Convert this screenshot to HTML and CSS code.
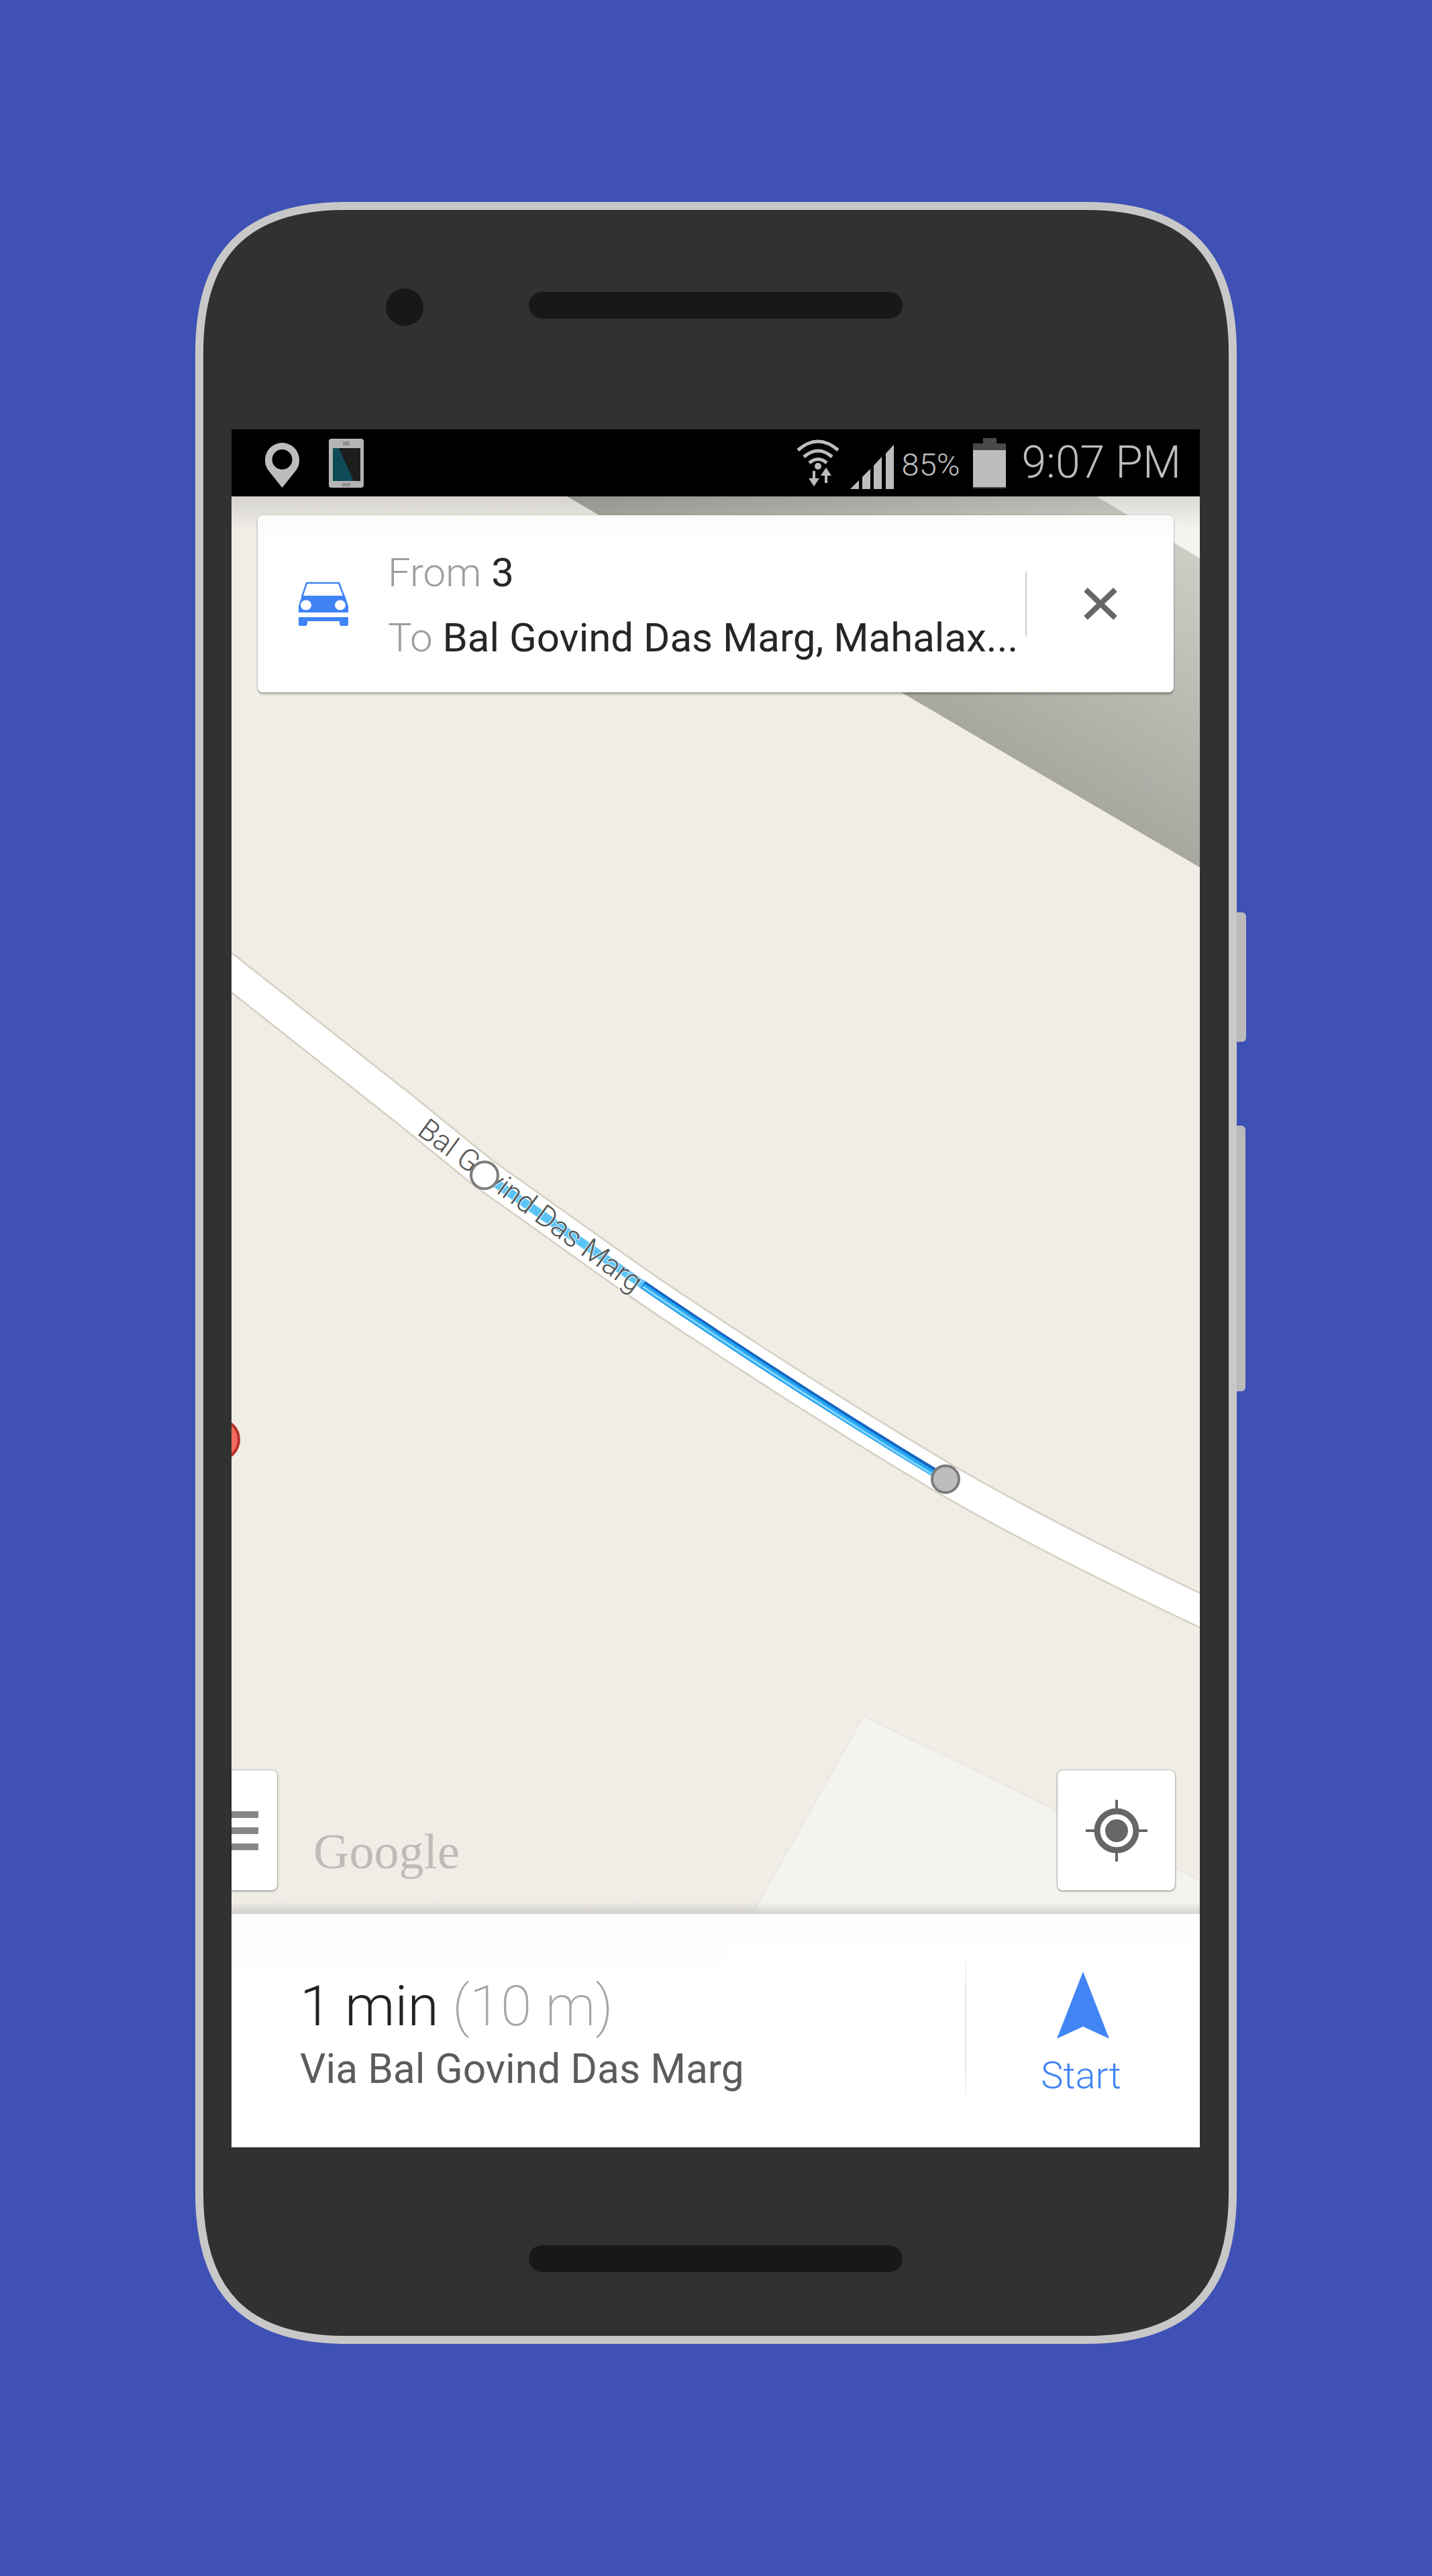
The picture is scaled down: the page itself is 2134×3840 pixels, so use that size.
FILE: index.html
```html
<!DOCTYPE html>
<html lang="en">
<head>
   <meta charset="UTF-8">
   <meta name="viewport" content="width=device-width, initial-scale=1.0">
   <title>Directions</title>
   <link rel="stylesheet" href="styles.css">
</head>
<body>

   <div class="phone">
      <!-- the corners are not quite circular, so the shell is a path -->
      <svg class="phone-shell" viewBox="0 0 1552 3193">
         <path fill="#313131" stroke="#c8c8c8" stroke-width="12" d="M225 6 H1327 C1476 6 1546 76 1546 225 V2968 C1546 3117 1476 3187 1327 3187 H225 C76 3187 6 3117 6 2968 V225 C6 76 76 6 225 6 Z"/>
      </svg>
      <div class="side-btn side-btn-upper"></div>
      <div class="side-btn side-btn-lower"></div>

      <div class="bezel-top">
         <div class="camera"></div>
         <div class="speaker"></div>
      </div>

      <div class="screen">
         <!-- status bar -->
         <div class="status-bar">
            <div class="status-left">
               <svg class="icon-pin" viewBox="395 657 51 68">
                  <path fill="#bdbdbd" fill-rule="evenodd" d="M420.500 725 L399 698 A25.500 26 0 1 1 442 698 Z M420.500 668 A15 15 0 1 0 420.501 698 A15 15 0 1 0 420.500 668 Z"/>
               </svg>
               <svg class="icon-device" viewBox="490 654 52 73">
                  <rect x="490" y="654" width="52" height="73" rx="4" fill="#b4b4b4"/>
                  <rect x="496" y="668" width="41" height="49" fill="#1d1d1d"/>
                  <polygon points="496,668 505,668 527,717 496,717" fill="#0f4a57"/>
                  <rect x="511" y="658" width="10" height="6" fill="#8f8f8f"/>
                  <rect x="510" y="720" width="12" height="5" fill="#8f8f8f"/>
               </svg>
            </div>
            <div class="status-right">
               <svg class="icon-wifi" viewBox="1186 652 66 74">
                  <g fill="none" stroke="#bdbdbd" stroke-width="5">
                     <path d="M1189 670 Q1219 644 1249 670"/>
                     <path d="M1198 680 Q1219 662 1240 680"/>
                     <path d="M1206 689 Q1219 678 1232 689"/>
                  </g>
                  <circle cx="1219" cy="694" r="5" fill="#bdbdbd"/>
                  <path fill="#bdbdbd" d="M1211 701 H1215 V712 H1221 L1213 724 L1205 712 H1211 Z"/>
                  <path fill="#bdbdbd" d="M1231 696 L1239 708 H1233 V719 H1229 V708 H1223 Z"/>
               </svg>
               <svg class="icon-signal" viewBox="1267 658 65 66">
                  <polygon fill="#bdbdbd" points="1267,724 1280,711 1280,724"/>
                  <polygon fill="#bdbdbd" points="1285,706 1297,694 1297,724 1285,724"/>
                  <polygon fill="#bdbdbd" points="1302,689 1314,676 1314,724 1302,724"/>
                  <polygon fill="#bdbdbd" points="1320,671 1332,658 1332,724 1320,724"/>
               </svg>
               <span class="status-pct">85%</span>
               <svg class="icon-battery" viewBox="1451 652 49 75">
                  <rect x="1466" y="652" width="20" height="9" fill="#4a4a4a"/>
                  <rect x="1451" y="660" width="49" height="10" fill="#4a4a4a"/>
                  <rect x="1451" y="670" width="49" height="55" fill="#bdbdbd"/>
                  <rect x="1451" y="725" width="49" height="2" fill="#4a4a4a"/>
               </svg>
               <span class="status-time">9:07 PM</span>
            </div>
         </div>

         <!-- map -->
         <div class="map">
            <svg class="map-canvas" viewBox="345 740 1443 2461">
               <defs>
                  <linearGradient id="buildingShade" gradientUnits="userSpaceOnUse" x1="1500" y1="1120" x2="1700" y2="780">
                     <stop offset="0" stop-color="#a8a8a1"/>
                     <stop offset="1" stop-color="#cdccc5"/>
                  </linearGradient>
                  <linearGradient id="topShade" x1="0" y1="0" x2="0" y2="1">
                     <stop offset="0" stop-color="#000" stop-opacity="0.11"/>
                     <stop offset="1" stop-color="#000" stop-opacity="0"/>
                  </linearGradient>
               </defs>
               <rect x="345" y="740" width="1443" height="2461" fill="#efede6"/>
               <polygon points="1287,2558 1788,2803 1788,3201 925,3201" fill="#f4f3ed" stroke="#e9e8e1" stroke-width="2"/>
               <polygon points="1634,740 1788,740 1788,832" fill="#f5f4ef"/>
               <polygon points="845,740 1634,740 1788,832 1788,1293" fill="url(#buildingShade)"/>
               <rect x="345" y="740" width="1443" height="50" fill="url(#topShade)"/>

               <path class="road-edge" d="M330 1438 L600 1651 L722 1750 C850 1840 950 1915 1059 1985 C1180 2065 1300 2140 1409 2205 C1530 2275 1660 2340 1800 2406"/>
               <path class="road" d="M330 1438 L600 1651 L722 1750 C850 1840 950 1915 1059 1985 C1180 2065 1300 2140 1409 2205 C1530 2275 1660 2340 1800 2406"/>

               <path class="route-faded" d="M722 1752 L958 1915"/>
               <path class="route-outer" d="M958 1915 C1090 2005 1260 2115 1409 2205"/>
               <path class="route-inner" d="M958 1917 C1090 2007 1260 2117 1408 2207"/>
               <path class="route-core" d="M958 1918 C1090 2008 1260 2118 1406 2208"/>

               <text class="road-label" transform="translate(620 1690) rotate(36.300)">Bal Govind Das Marg</text>

               <circle class="stop stop-start" cx="722" cy="1752" r="20"/>
               <circle class="stop stop-end" cx="1409" cy="2205" r="20"/>
               <circle class="poi" cx="326" cy="2146" r="30"/>
            </svg>

            <div class="search-card">
               <svg class="icon-car" viewBox="445 869 74 66">
                  <path fill="none" stroke="#4083f5" stroke-width="2.500" d="M450 892 L457 871 H505 L513 892"/>
                  <path fill="#4083f5" d="M450 890 H514 L519 905 V915 H445 V905 Z"/>
                  <ellipse cx="456" cy="904" rx="8" ry="7.500" fill="#fff"/>
                  <ellipse cx="507" cy="904" rx="8" ry="7.500" fill="#fff"/>
                  <path fill="#4083f5" d="M445 922 H519 V933 Q519 935 516 935 H509 Q506 935 506 931 V928 H458 V931 Q458 935 455 935 H448 Q445 935 445 933 Z"/>
               </svg>
               <div class="search-text">
                  <div class="search-line"><span class="muted">From</span> 3</div>
                  <div class="search-line"><span class="muted">To</span> Bal Govind Das Marg, Mahalax...</div>
               </div>
               <div class="search-divider"></div>
               <svg class="icon-close" viewBox="0 0 50 48">
                  <path d="M3 3 L47 45 M47 3 L3 45" fill="none" stroke="#666" stroke-width="8"/>
               </svg>
            </div>

            <div class="map-controls">
               <div class="map-btn menu-btn">
                  <span class="menu-line"></span>
                  <span class="menu-line"></span>
                  <span class="menu-line"></span>
               </div>
               <span class="google-mark">Google</span>
               <div class="map-btn locate-btn">
                  <svg class="icon-locate" viewBox="0 0 92 92">
                     <circle cx="46" cy="46" r="29" fill="none" stroke="#666" stroke-width="9"/>
                     <circle cx="46" cy="46" r="17" fill="#666"/>
                     <path d="M46 0 V14 M46 78 V92 M0 46 H14 M78 46 H92" stroke="#666" stroke-width="4"/>
                  </svg>
               </div>
            </div>
         </div>

         <!-- route summary -->
         <div class="summary">
            <div class="summary-info">
               <div class="summary-time">1 min <span class="summary-dist">(10 m)</span></div>
               <div class="summary-via">Via Bal Govind Das Marg</div>
            </div>
            <div class="summary-divider"></div>
            <div class="start-btn">
               <svg class="icon-start" viewBox="0 0 78 100">
                  <path fill="#4285f4" d="M39 0 L78 100 L39 82 L0 100 Z"/>
               </svg>
               <span class="start-label">Start</span>
            </div>
         </div>
      </div>

      <div class="bezel-bottom">
         <div class="speaker"></div>
      </div>
   </div>

</body>
</html>
```

FILE: styles.css
```css
body {
   margin: 0;
   padding: 301px 0 0 291px;
   background-color: #3f51b5;
   font-family: 'Roboto', 'Liberation Sans', sans-serif;
   height: 3539px;
   overflow: hidden;
}

/* device */
.phone {
   position: relative;
   z-index: 0;
   box-sizing: border-box;
   width: 1552px;
   height: 3193px;
   padding: 12px 55px 12px 54px;
}
.phone-shell {
   position: absolute;
   top: 0;
   left: 0;
   z-index: -1;
   width: 1552px;
   height: 3193px;
}
.side-btn {
   position: absolute;
   left: 100%;
   background-color: #bababa;
   border-radius: 0 6px 6px 0;
}
.side-btn-upper {
   top: 1059px;
   width: 14px;
   height: 193px;
}
.side-btn-lower {
   top: 1377px;
   width: 13px;
   height: 396px;
}
.bezel-top {
   display: flex;
   align-items: flex-start;
   height: 327px;
   padding: 117px 0 0 230px;
   box-sizing: border-box;
}
.bezel-bottom {
   display: flex;
   justify-content: center;
   height: 281px;
   padding-top: 146px;
   box-sizing: border-box;
}
.camera {
   width: 56px;
   height: 56px;
   border-radius: 50%;
   background-color: #181818;
   margin-right: 157px;
}
.speaker {
   width: 557px;
   height: 40px;
   border-radius: 20px;
   background-color: #181818;
}
.bezel-top .speaker {
   margin-top: 5px;
}

/* screen */
.screen {
   display: flex;
   flex-direction: column;
   width: 1443px;
   height: 2561px;
   background-color: #fff;
}
.status-bar {
   display: flex;
   justify-content: space-between;
   align-items: center;
   flex: none;
   height: 100px;
   padding: 0 28px 0 50px;
   box-sizing: border-box;
   background-color: #000;
   color: #bdbdbd;
}
.status-left, .status-right {
   display: flex;
   align-items: center;
}
.icon-pin {
   width: 51px;
   height: 68px;
   margin-top: 6px;
   margin-right: 44px;
}
.icon-device {
   width: 52px;
   height: 73px;
}
.icon-wifi {
   width: 66px;
   height: 74px;
   margin-right: 15px;
}
.icon-signal {
   width: 65px;
   height: 66px;
   margin-top: 12px;
   margin-right: 12px;
}
.status-pct {
   font-size: 47px;
   font-weight: 300;
   line-height: 60px;
   margin-top: 6px;
   margin-right: 20px;
}
.icon-battery {
   width: 49px;
   height: 75px;
   margin-right: 23px;
}
.status-time {
   font-size: 66px;
   font-weight: 300;
   line-height: 80px;
}

/* map */
.map {
   position: relative;
   display: flex;
   flex-direction: column;
   flex: 1;
   min-height: 0;
}
.map-canvas {
   position: absolute;
   top: 0;
   left: 0;
   width: 1443px;
   height: 2461px;
}
.road-edge, .road, .route-faded, .route-outer, .route-inner, .route-core {
   fill: none;
}
.road-edge {
   stroke: #d5d0c0;
   stroke-width: 49px;
}
.road {
   stroke: #fff;
   stroke-width: 44px;
}
.route-faded {
   stroke: #5cc4f5;
   stroke-width: 13px;
}
.route-outer {
   stroke: #1565c0;
   stroke-width: 13px;
}
.route-inner {
   stroke: #25a8f5;
   stroke-width: 9px;
}
.route-core {
   stroke: #8ad6fa;
   stroke-width: 3px;
}
.road-label {
   font-family: 'Roboto', sans-serif;
   font-size: 44px;
   font-weight: 300;
   fill: #555;
   stroke: rgba(255, 255, 255, 0.6);
   stroke-width: 3px;
   paint-order: stroke;
}
.stop {
   stroke: #7c7c7c;
   stroke-width: 4px;
}
.stop-start {
   fill: #fff;
}
.stop-end {
   fill: #bdbdbd;
}
.poi {
   fill: #f26a60;
   stroke: #b8322a;
   stroke-width: 4px;
}

/* direction card */
.search-card {
   position: relative;
   display: flex;
   align-items: center;
   flex: none;
   height: 264px;
   margin: 28px 39px 0;
   padding-left: 61px;
   background: linear-gradient(#fafafa, #fff 30px);
   border-radius: 8px;
   box-shadow: 0 3px 3px rgba(0, 0, 0, 0.25), 0 0 3px rgba(0, 0, 0, 0.2);
}
.icon-car {
   flex: none;
   width: 74px;
   height: 66px;
   margin-right: 59px;
}
.search-text {
   flex: 1;
   min-width: 0;
   padding-top: 4px;
   white-space: nowrap;
   color: #262626;
   font-size: 60px;
}
.search-line {
   line-height: 97px;
}
.muted {
   color: #9e9e9e;
   font-weight: 300;
}
.search-divider {
   flex: none;
   width: 2px;
   height: 97px;
   background-color: #ccc;
}
.icon-close {
   flex: none;
   width: 50px;
   height: 48px;
   margin: 0 84px 0 85px;
}

/* map buttons */
.map-controls {
   position: relative;
   display: flex;
   align-items: flex-start;
   margin-top: auto;
   margin-bottom: 35px;
   padding-right: 37px;
}
.map-btn {
   flex: none;
   height: 179px;
   background-color: #fff;
   border-radius: 8px;
   box-shadow: 0 1px 3px rgba(0, 0, 0, 0.4), 0 0 3px rgba(0, 0, 0, 0.3);
}
.menu-btn {
   display: flex;
   flex-direction: column;
   justify-content: center;
   gap: 14px;
   width: 68px;
   border-radius: 0 8px 8px 0;
}
.menu-line {
   display: block;
   width: 40px;
   height: 10px;
   background-color: #85858a;
}
.google-mark {
   margin: 79px 0 0 54px;
   font-family: 'Liberation Serif', serif;
   font-size: 74px;
   line-height: 84px;
   color: #bdbcb6;
}
.locate-btn {
   display: flex;
   justify-content: center;
   align-items: center;
   width: 175px;
   margin-left: auto;
}
.icon-locate {
   width: 92px;
   height: 92px;
}

/* bottom panel */
.summary {
   position: relative;
   display: flex;
   align-items: flex-start;
   flex: none;
   height: 348px;
   padding-left: 102px;
   box-sizing: border-box;
   background: linear-gradient(rgba(255, 255, 255, 0.94), #fff 45%);
}
.summary::before {
   content: '';
   position: absolute;
   left: 0;
   right: 0;
   bottom: 100%;
   height: 18px;
   background: linear-gradient(rgba(0, 0, 0, 0), rgba(0, 0, 0, 0.13));
}
.summary-info {
   flex: 1;
   padding-top: 90px;
}
.summary-time {
   font-size: 84px;
   font-weight: 300;
   line-height: 96px;
   color: #222;
}
.summary-dist {
   color: #a6a6a6;
   font-weight: 200;
}
.summary-via {
   margin-top: 10px;
   font-size: 60.500px;
   line-height: 72px;
   color: #5c5c5c;
}
.summary-divider {
   flex: none;
   width: 2px;
   height: 212px;
   margin-top: 67px;
   background: linear-gradient(rgba(220, 220, 220, 0.1), #e2e2e2 30%, #e2e2e2 70%, rgba(220, 220, 220, 0.1));
}
.start-btn {
   display: flex;
   flex-direction: column;
   align-items: center;
   flex: none;
   width: 348px;
   padding-top: 86px;
}
.icon-start {
   width: 78px;
   height: 100px;
}
.start-label {
   margin: 22px 6px 0 0;
   font-size: 56px;
   font-weight: 300;
   line-height: 66px;
   color: #4285f4;
}
```
